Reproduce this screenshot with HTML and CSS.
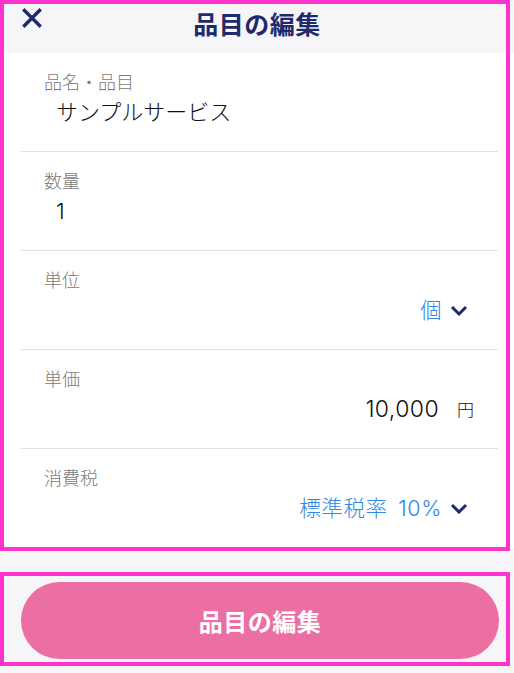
FILE: index.html
```html
<!DOCTYPE html>
<html lang="ja">
<head>
<meta charset="utf-8">
<title>品目の編集</title>
<link rel="stylesheet" href="styles.css">
</head>
<body>
<div class="page">
  <header class="header">
    <button class="close" aria-label="閉じる">
      <svg width="20" height="20" viewBox="0 0 20 20"><path d="M2.5 2.5 L17.5 17.5 M17.5 2.5 L2.5 17.5" stroke="#1f2a6d" stroke-width="3.4" stroke-linecap="square" fill="none"/></svg>
    </button>
    <h1 class="title">品目の編集</h1>
    <span></span>
  </header>

  <main class="list">
    <div class="row">
      <div class="label">品名・品目</div>
      <div class="value">サンプルサービス</div>
    </div>
    <div class="row">
      <div class="label">数量</div>
      <div class="value">1</div>
    </div>
    <div class="row">
      <div class="label">単位</div>
      <div class="value right select">個<svg class="chev" width="18" height="11" viewBox="0 0 18 11"><path d="M2 2 L9 9 L16 2" stroke="#1f2a6d" stroke-width="3" fill="none"/></svg></div>
    </div>
    <div class="row">
      <div class="label">単価</div>
      <div class="value right price">10,000<span class="unit">円</span></div>
    </div>
    <div class="row">
      <div class="label">消費税</div>
      <div class="value right select">標準税率 10%<svg class="chev" width="18" height="11" viewBox="0 0 18 11"><path d="M2 2 L9 9 L16 2" stroke="#1f2a6d" stroke-width="3" fill="none"/></svg></div>
    </div>
  </main>

  <footer class="footer">
    <button class="submit">品目の編集</button>
  </footer>

  <div class="mark mark-top"></div>
  <div class="mark mark-bottom"></div>
</div>
</body>
</html>
```

FILE: styles.css
```css
* { box-sizing: border-box; }
html, body { margin: 0; padding: 0; }
body {
  width: 514px;
  height: 673px;
  overflow: hidden;
  background: #f6f6f8;
  font-family: "Noto Sans CJK JP", "Noto Sans", sans-serif;
}
.page {
  position: relative;
  width: 514px;
  height: 673px;
  display: flex;
  flex-direction: column;
}
.header {
  height: 53px;
  background: #f6f6f8;
  display: grid;
  grid-template-columns: 1fr auto 1fr;
  align-items: start;
}
.close {
  justify-self: start;
  margin: 8px 0 0 22px;
  padding: 0;
  border: 0;
  background: none;
  width: 20px;
  height: 20px;
  display: block;
}
.close svg { display: block; }
.title {
  margin: 0;
  padding-top: 5px;
  font-size: 25px;
  line-height: 36px;
  font-weight: 700;
  color: #1f2a6d;
  letter-spacing: 0.5px;
}
.list {
  background: #fff;
  padding: 0 16px 0 21px;
}
.row {
  height: 99px;
  padding: 15px 0 0 23px;
  border-bottom: 1.5px solid #e2e2e2;
}
.label {
  font-size: 18px;
  line-height: 26px;
  font-weight: 300;
  color: #7a7a7a;
}
.value {
  margin-top: 3px;
  padding-left: 12px;
  font-family: "Inter", "Noto Sans CJK JP", sans-serif;
  font-size: 22px;
  line-height: 30px;
  font-weight: 300;
  color: #111;
}
.value.right {
  display: flex;
  justify-content: flex-end;
  align-items: center;
  padding-left: 0;
  padding-right: 24px;
}
.select {
  color: #2f87e6;
  font-size: 21.5px;
  letter-spacing: 0.6px;
  word-spacing: 4px;
}
.chev {
  margin-left: 8px;
  margin-right: 6px;
  display: block;
}
.price {
  font-size: 23px;
  letter-spacing: 0.4px;
  color: #111;
}
.unit {
  font-size: 17px;
  letter-spacing: 0;
  margin-left: 18px;
  position: relative;
  top: 1px;
}
.footer {
  flex: 1;
  background: #f6f6f8;
  padding: 34px 15px 0 21px;
}
.submit {
  width: 100%;
  height: 77px;
  border: 0;
  border-radius: 39px;
  background: #ec6fa3;
  color: #fff;
  font-family: "Noto Sans CJK JP", "Noto Sans", sans-serif;
  font-size: 24px;
  font-weight: 700;
  letter-spacing: 0.5px;
  display: block;
}
.mark {
  position: absolute;
  left: 0;
  width: 510px;
  border: 4px solid #fc33cf;
  pointer-events: none;
}
.mark-top { top: 0; height: 551px; }
.mark-bottom { top: 572px; height: 94px; }
```
